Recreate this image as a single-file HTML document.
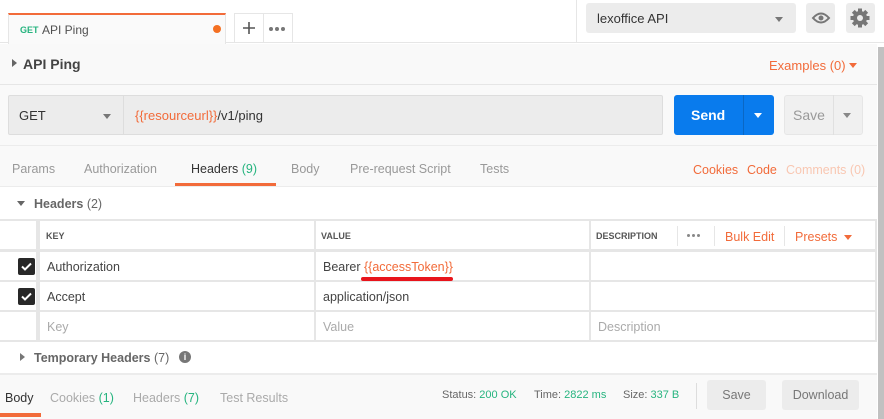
<!DOCTYPE html><html><head><meta charset="utf-8"><style>
*{margin:0;padding:0;box-sizing:border-box}
body{width:884px;height:419px;position:relative;overflow:hidden;background:#fff;font-family:"Liberation Sans",sans-serif;font-size:12px;color:#505050}
.a{position:absolute}
.o{color:#f26b3a}.g{color:#26b47f}
.cell{position:absolute;background:#fff}
.caret{width:0;height:0;border-left:4px solid transparent;border-right:4px solid transparent;border-top:5px solid #777;position:absolute}
.dots{position:absolute;display:flex;gap:2px}.dots i{width:4px;height:4px;border-radius:50%;background:#777;display:block}
</style></head><body>
<div class="a" style="left:0;top:0;width:884px;height:43px;background:#fff;border-bottom:1px solid #e6e6e6"></div>
<div class="a" style="left:8px;top:13px;width:218px;height:31px;background:#fafafa;border-top:2px solid #f26b3a;border-left:1px solid #e6e6e6;border-right:1px solid #e6e6e6"></div>
<div class="a" style="left:20px;top:25px;font-size:9px;font-weight:bold"><span class="g">GET</span></div>
<div class="a" style="left:42px;top:23px;font-size:12px">API Ping</div>
<div class="a" style="left:213px;top:25px;width:8px;height:8px;border-radius:50%;background:#f47023"></div>
<div class="a" style="left:234px;top:13px;width:59px;height:30px;border:1px solid #e6e6e6;border-bottom:none"></div>
<div class="a" style="left:263px;top:13px;width:1px;height:30px;background:#e6e6e6"></div>
<svg class="a" style="left:242px;top:21px" width="14" height="14"><path d="M7 1v12M1 7h12" stroke="#555" stroke-width="1.6"/></svg>
<div class="dots" style="left:269px;top:27px"><i></i><i></i><i></i></div>
<div class="a" style="left:576px;top:0;width:1px;height:43px;background:#e6e6e6"></div>
<div class="a" style="left:586px;top:3px;width:210px;height:30px;background:#ececec;border-radius:3px"></div>
<div class="a" style="left:597px;top:11px;font-size:13px;color:#333">lexoffice API</div>
<div class="caret" style="left:775px;top:17px"></div>
<div class="a" style="left:806px;top:3px;width:29px;height:30px;background:#ececec;border-radius:3px"></div>
<svg class="a" style="left:811px;top:11px" width="20" height="14" viewBox="0 0 20 14"><path d="M2 7Q10 -2 18 7Q10 16 2 7Z" fill="none" stroke="#777" stroke-width="2"/><circle cx="10" cy="7" r="2.5" fill="#777"/></svg>
<div class="a" style="left:846px;top:3px;width:29px;height:30px;background:#ececec;border-radius:3px"></div>
<svg class="a" style="left:850px;top:8px" width="20" height="20" viewBox="-10 -10 20 20"><g fill="#777"><rect x="-2" y="-9.5" width="4" height="19"/><rect x="-2" y="-9.5" width="4" height="19" transform="rotate(45)"/><rect x="-2" y="-9.5" width="4" height="19" transform="rotate(90)"/><rect x="-2" y="-9.5" width="4" height="19" transform="rotate(135)"/><circle r="7"/></g><circle r="3" fill="#ececec"/></svg>
<div class="a" style="left:0;top:44px;width:877px;height:142px;background:#f9f9f9"></div>
<div class="a" style="left:877px;top:44px;width:7px;height:375px;background:#fff"></div>
<div class="a" style="left:878px;top:47px;width:6px;height:372px;background:#c1c1c1"></div>
<div class="a" style="left:12px;top:59px;width:0;height:0;border-top:4px solid transparent;border-bottom:4px solid transparent;border-left:5px solid #666"></div>
<div class="a" style="left:23px;top:56px;font-size:14px;font-weight:bold;color:#444">API Ping</div>
<div class="a o" style="left:769px;top:58px;font-size:13px">Examples (0)</div>
<div class="caret" style="left:849px;top:63px;border-top-color:#f26b3a"></div>
<div class="a" style="left:0;top:84px;width:877px;height:1px;background:#e6e6e6"></div>
<div class="a" style="left:8px;top:95px;width:655px;height:40px;background:#ececec;border:1px solid #ddd;border-radius:2px"></div>
<div class="a" style="left:123px;top:95px;width:1px;height:40px;background:#ddd"></div>
<div class="a" style="left:19px;top:108px;font-size:13px;color:#333">GET</div>
<div class="caret" style="left:103px;top:114px"></div>
<div class="a" style="left:135px;top:108px;font-size:13px;color:#333"><span class="o">{{resourceurl}}</span>/v1/ping</div>
<div class="a" style="left:674px;top:95px;width:100px;height:40px;background:#097bed;border-radius:3px"></div>
<div class="a" style="left:743px;top:95px;width:1px;height:40px;background:#0a67c4"></div>
<div class="a" style="left:691px;top:107px;font-size:14px;font-weight:bold;color:#fff">Send</div>
<div class="caret" style="left:754px;top:113px;border-top-color:#fff"></div>
<div class="a" style="left:784px;top:95px;width:79px;height:40px;background:#f0f0f0;border-radius:3px;border:1px solid #e6e6e6"></div>
<div class="a" style="left:833px;top:95px;width:1px;height:40px;background:#e0e0e0"></div>
<div class="a" style="left:793px;top:107px;font-size:14px;color:#999">Save</div>
<div class="caret" style="left:843px;top:113px;border-top-color:#888"></div>
<div class="a" style="left:0;top:145px;width:877px;height:1px;background:#ececec"></div>
<div class="a" style="left:12px;top:162px;font-size:12.5px;color:#999">Params</div>
<div class="a" style="left:84px;top:162px;font-size:12.5px;color:#999">Authorization</div>
<div class="a" style="left:191px;top:162px;font-size:12.5px;color:#333">Headers <span class="g">(9)</span></div>
<div class="a" style="left:291px;top:162px;font-size:12.5px;color:#999">Body</div>
<div class="a" style="left:350px;top:162px;font-size:12.5px;color:#999">Pre-request Script</div>
<div class="a" style="left:480px;top:162px;font-size:12.5px;color:#999">Tests</div>
<div class="a o" style="left:693px;top:163px;font-size:12.5px">Cookies</div>
<div class="a o" style="left:747px;top:163px;font-size:12.5px">Code</div>
<div class="a" style="left:786px;top:163px;font-size:12.5px;color:#f9c7b2">Comments (0)</div>
<div class="a" style="left:175px;top:183px;width:101px;height:3px;background:#f26b3a"></div>
<div class="a" style="left:0;top:186px;width:877px;height:1px;background:#ececec"></div>
<div class="a" style="left:17px;top:201px;width:0;height:0;border-left:4px solid transparent;border-right:4px solid transparent;border-top:5px solid #666"></div>
<div class="a" style="left:34px;top:197px;font-size:12.5px;font-weight:bold;color:#666">Headers <span style="font-weight:normal">(2)</span></div>
<div class="a" style="left:0;top:219px;width:877px;height:123px;background:#e6e6e6"></div>
<div class="cell" style="left:0;top:221px;width:36px;height:28px"></div>
<div class="cell" style="left:40px;top:221px;width:274px;height:28px"></div>
<div class="cell" style="left:316px;top:221px;width:273px;height:28px"></div>
<div class="cell" style="left:591px;top:221px;width:284px;height:28px"></div>
<div class="a" style="left:46px;top:231px;font-size:9px;font-weight:bold;color:#555">KEY</div>
<div class="a" style="left:321px;top:231px;font-size:9px;font-weight:bold;color:#555">VALUE</div>
<div class="a" style="left:596px;top:231px;font-size:9px;font-weight:bold;color:#555">DESCRIPTION</div>
<div class="a" style="left:677px;top:226px;width:1px;height:20px;background:#e6e6e6"></div>
<div class="dots" style="left:687px;top:234px"><i style="width:3px;height:3px;background:#888"></i><i style="width:3px;height:3px;background:#888"></i><i style="width:3px;height:3px;background:#888"></i></div>
<div class="a" style="left:714px;top:226px;width:1px;height:20px;background:#e6e6e6"></div>
<div class="a o" style="left:725px;top:230px;font-size:12.5px">Bulk Edit</div>
<div class="a" style="left:784px;top:226px;width:1px;height:20px;background:#e6e6e6"></div>
<div class="a o" style="left:795px;top:230px;font-size:12.5px">Presets</div>
<div class="caret" style="left:844px;top:235px;border-top-color:#f26b3a"></div>
<div class="cell" style="left:0;top:252px;width:36px;height:28px"></div>
<div class="cell" style="left:40px;top:252px;width:274px;height:28px"></div>
<div class="cell" style="left:316px;top:252px;width:273px;height:28px"></div>
<div class="cell" style="left:591px;top:252px;width:284px;height:28px"></div>
<div class="cell" style="left:0;top:282px;width:36px;height:28px"></div>
<div class="cell" style="left:40px;top:282px;width:274px;height:28px"></div>
<div class="cell" style="left:316px;top:282px;width:273px;height:28px"></div>
<div class="cell" style="left:591px;top:282px;width:284px;height:28px"></div>
<div class="cell" style="left:0;top:312px;width:36px;height:28px"></div>
<div class="cell" style="left:40px;top:312px;width:274px;height:28px"></div>
<div class="cell" style="left:316px;top:312px;width:273px;height:28px"></div>
<div class="cell" style="left:591px;top:312px;width:284px;height:28px"></div>
<svg class="a" style="left:18px;top:258px" width="17" height="17"><rect width="17" height="17" rx="2" fill="#282828"/><path d="M4 8.5l3 3 6-6" stroke="#fff" stroke-width="2" fill="none"/></svg>
<svg class="a" style="left:18px;top:288px" width="17" height="17"><rect width="17" height="17" rx="2" fill="#282828"/><path d="M4 8.5l3 3 6-6" stroke="#fff" stroke-width="2" fill="none"/></svg>
<div class="a" style="left:47px;top:260px;font-size:12.5px;color:#444">Authorization</div>
<div class="a" style="left:323px;top:260px;font-size:12.5px;color:#444">Bearer <span class="o">{{accessToken}}</span></div>
<div class="a" style="left:361px;top:277px;width:92px;height:4px;background:#e8141b;border-radius:2px"></div>
<div class="a" style="left:47px;top:290px;font-size:12.5px;color:#444">Accept</div>
<div class="a" style="left:323px;top:290px;font-size:12.5px;color:#444">application/json</div>
<div class="a" style="left:47px;top:320px;font-size:12.5px;color:#aaa">Key</div>
<div class="a" style="left:323px;top:320px;font-size:12.5px;color:#aaa">Value</div>
<div class="a" style="left:598px;top:320px;font-size:12.5px;color:#aaa">Description</div>
<div class="a" style="left:20px;top:353px;width:0;height:0;border-top:4px solid transparent;border-bottom:4px solid transparent;border-left:5px solid #777"></div>
<div class="a" style="left:34px;top:351px;font-size:12.5px;font-weight:bold;color:#666">Temporary Headers <span style="font-weight:normal">(7)</span></div>
<div class="a" style="left:179px;top:351px;width:12px;height:12px;border-radius:50%;background:#777;color:#fff;font-size:9px;font-weight:bold;text-align:center;line-height:12px">i</div>
<div class="a" style="left:0;top:373px;width:877px;height:46px;background:#f9f9f9;border-top:2px solid #ececec"></div>
<div class="a" style="left:5px;top:391px;font-size:12.5px;color:#333">Body</div>
<div class="a" style="left:50px;top:391px;font-size:12.5px;color:#aaa">Cookies <span class="g">(1)</span></div>
<div class="a" style="left:133px;top:391px;font-size:12.5px;color:#aaa">Headers <span class="g">(7)</span></div>
<div class="a" style="left:220px;top:391px;font-size:12.5px;color:#aaa">Test Results</div>
<div class="a" style="left:0;top:413px;width:41px;height:4px;background:#f26b3a"></div>
<div class="a" style="left:442px;top:389px;font-size:11px;color:#666">Status: <span class="g">200 OK</span></div>
<div class="a" style="left:534px;top:389px;font-size:11px;color:#666">Time: <span class="g">2822 ms</span></div>
<div class="a" style="left:623px;top:389px;font-size:11px;color:#666">Size: <span class="g">337 B</span></div>
<div class="a" style="left:696px;top:383px;width:1px;height:26px;background:#ddd"></div>
<div class="a" style="left:707px;top:380px;width:59px;height:30px;background:#ececec;border-radius:3px;text-align:center;line-height:30px;font-size:12.5px;color:#777">Save</div>
<div class="a" style="left:782px;top:380px;width:77px;height:30px;background:#ececec;border-radius:3px;text-align:center;line-height:30px;font-size:12.5px;color:#777">Download</div>
</body></html>
